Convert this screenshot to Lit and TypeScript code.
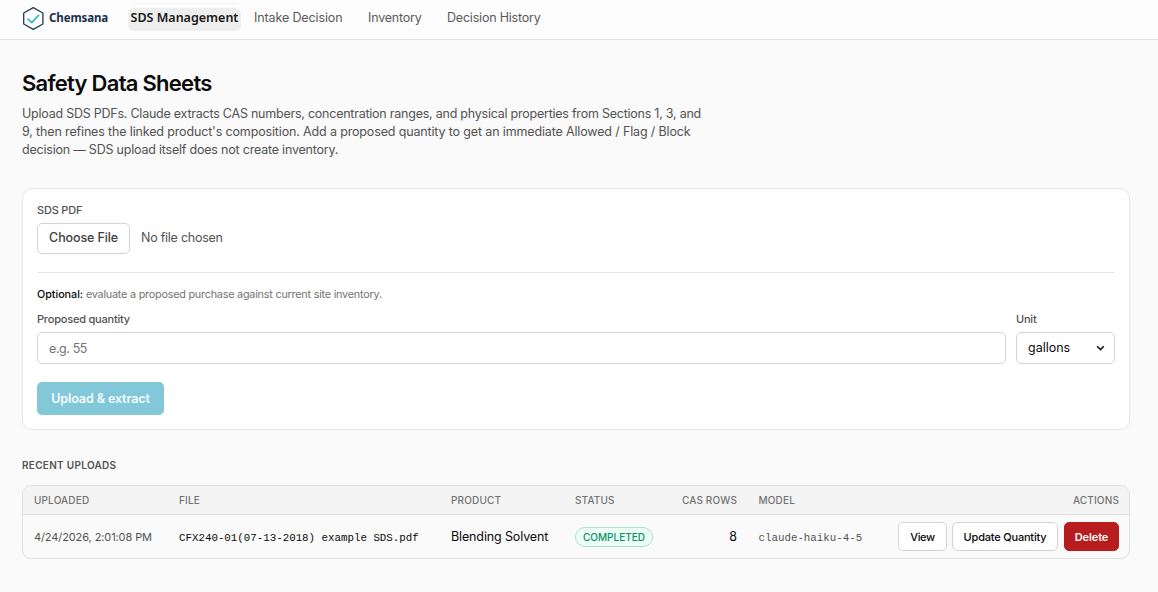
import { LitElement, html, css } from "lit";
import { customElement } from "lit/decorators.js";

@customElement("app-root")
export class AppRoot extends LitElement {
  static styles = css`
    :host { display: block; height: 592px; box-sizing: border-box; background: #fafafa; color: #0a0a0a; font: 12.5px/18px Inter, "Liberation Sans", sans-serif; overflow: hidden; }
    * { box-sizing: border-box; }
    button { font: inherit; color: inherit; margin: 0; }
    header { height: 40px; background: #fdfdfd; border-bottom: 1px solid #e5e5e5; display: flex; align-items: flex-start; padding: 0 22px; }
    .brand { display: flex; align-items: center; height: 37px; width: 106px; gap: 5px; }
    .brand svg { width: 22px; height: 25px; flex: none; }
    .brand span { font: 700 11.5px/18px "Noto Sans", sans-serif; color: #17304d; padding-bottom: 2px; letter-spacing: -0.1px; }
    nav { display: flex; align-items: flex-start; padding-top: 8px; color: #5a5a5a; letter-spacing: -0.2px; }
    nav a { height: 23px; line-height: 19px; white-space: nowrap; }
    .active { position: relative; width: 113px; background: #eeeeee; border-radius: 6px; text-align: center; font: 600 12.5px/19px "Noto Sans", sans-serif; letter-spacing: 0; color: #171717; margin-right: 13px; }
    .active::before { content: ""; position: absolute; left: 5px; right: 4px; top: -5px; height: 1px; background: #f5f5f5; }
    .n1 { width: 114px; letter-spacing: -0.12px; }
    .n2 { width: 79px; }
    main { padding: 30px 28px 0 22px; }
    h1 { margin: 0; font-size: 22px; line-height: 26px; font-weight: 600; letter-spacing: -0.73px; width: max-content; }
    .intro { margin: 9px 0 0; color: #525252; white-space: nowrap; }
    .intro span { display: block; width: max-content; line-height: 17px; padding-bottom: 1px; }
    .p1 { letter-spacing: -0.235px; }
    .p2 { letter-spacing: -0.148px; }
    .p3 { letter-spacing: -0.21px; }
    .card { margin-top: 29px; height: 242px; background: #fff; border: 1px solid #e5e5e5; border-radius: 10px; padding: 14px; display: flex; flex-direction: column; }
    .label { font-size: 11px; line-height: 14px; color: #525252; font-weight: 500; letter-spacing: -0.2px; width: max-content; }
    .filerow { display: flex; align-items: center; gap: 11px; margin-top: 6px; height: 31px; color: #525252; }
    .choose { width: 93px; height: 31px; border: 1px solid #d4d4d4; border-radius: 5px; background: #fff; padding: 0 0 1px; color: #404040; font-weight: 500; letter-spacing: -0.13px; }
    .filerow > span { padding-bottom: 1px; letter-spacing: -0.25px; }
    .rule { height: 1px; background: #e5e5e5; margin-top: 18px; }
    .hint { font-size: 10.8px; line-height: 14px; color: #737373; margin-top: 15px; width: max-content; letter-spacing: -0.21px; }
    .hint b { color: #0a0a0a; font-weight: 500; letter-spacing: -0.05px; }
    .fields { display: flex; gap: 10px; margin-top: 10px; }
    .qty { flex: 1; }
    .unit { width: 99px; }
    .control { display: flex; align-items: center; justify-content: space-between; height: 32px; margin-top: 6px; border: 1px solid #d4d4d4; border-radius: 5px; padding: 0 9px 0 11px; background: #fff; }
    .qty .control { color: #737373; padding: 1px 11px 0; letter-spacing: -0.4px; }
    .upload { width: 127px; height: 33px; margin-top: 18px; border: 0; border-radius: 5px; background: #83c8d8; color: #f5fbfc; font-weight: 600; padding: 0; letter-spacing: -0.1px; }
    h2 { margin: 28px 0 0; font-size: 10px; line-height: 14px; font-weight: 600; color: #525252; letter-spacing: 0.3px; width: max-content; }
    .table { margin-top: 13px; height: 74px; border: 1px solid #e0e0e0; border-radius: 9px; overflow: hidden; }
    .row { display: grid; grid-template-columns: 145px 272px 124px 106px 78px 120px 1fr; align-items: center; }
    .row > div { padding: 0 10px 0 11px; white-space: nowrap; }
    .row > .cas { padding-right: 11px; text-align: right; }
    .row > .model { padding-left: 10.5px; }
    .head { height: 29px; padding-bottom: 1px; background: #f4f4f4; border-bottom: 1px solid #e0e0e0; font-size: 10px; line-height: 14px; color: #737373; font-weight: 500; letter-spacing: 0.15px; }
    .body { height: 43px; }
    .right { text-align: right; justify-content: flex-end; }
    .small { font-size: 11px; color: #525252; letter-spacing: -0.1px; }
    .product { letter-spacing: -0.13px; }
    .row > .mono { font: 10.8px/18px "Liberation Mono", monospace; padding-top: 2px; }
    .muted { color: #525252; }
    .badge { display: flex; align-items: center; justify-content: center; width: 78px; height: 20px; border: 1px solid #a7e3cd; border-radius: 10px; background: #ecfdf5; color: #0b8f68; font-size: 10px; font-weight: 500; }
    .actions { display: flex; gap: 5px; }
    .actions button { height: 29px; border: 1px solid #d4d4d4; border-radius: 5px; background: #fff; padding: 0; font-size: 11px; font-weight: 500; letter-spacing: -0.2px; }
    .actions .view { width: 49px; letter-spacing: -0.35px; }
    .update { width: 106px; }
    .actions .delete { width: 55px; margin-left: 1px; background: #b91c1c; border-color: #b91c1c; color: #fff; font-weight: 600; letter-spacing: -0.1px; }
  `;
  render() {
    return html`
      <header>
        <div class="brand">
          <svg viewBox="0 0 22 25" fill="none"><path d="M11.3 1.6 20.9 7v11L11.3 23.4 1.7 18V7Z" stroke="#1f3a56" stroke-width="1.3" stroke-linejoin="round"/><path d="m5.9 13 4 3.6 6.7-7.3" stroke="#14b8a0" stroke-width="1.5" stroke-linecap="round" stroke-linejoin="round"/></svg>
          <span>Chemsana</span>
        </div>
        <nav><a class="active">SDS Management</a><a class="n1">Intake Decision</a><a class="n2">Inventory</a><a>Decision History</a></nav>
      </header>
      <main>
        <h1>Safety Data Sheets</h1>
        <p class="intro"><span class="p1">Upload SDS PDFs. Claude extracts CAS numbers, concentration ranges, and physical properties from Sections 1, 3, and</span><span class="p2">9, then refines the linked product's composition. Add a proposed quantity to get an immediate Allowed / Flag / Block</span><span class="p3">decision — SDS upload itself does not create inventory.</span></p>
        <section class="card">
          <div class="label">SDS PDF</div>
          <div class="filerow"><button class="choose">Choose File</button><span>No file chosen</span></div>
          <div class="rule"></div>
          <div class="hint"><b>Optional:</b> <span>evaluate a proposed purchase against current site inventory.</span></div>
          <div class="fields">
            <div class="qty"><div class="label">Proposed quantity</div><div class="control"><span>e.g. 55</span></div></div>
            <div class="unit"><div class="label">Unit</div><div class="control"><span>gallons</span><svg width="9" height="6" viewBox="0 0 9 6" fill="none"><path d="m1.2 1.2 3.3 3.3 3.3-3.3" stroke="#171717" stroke-width="1.6"/></svg></div></div>
          </div>
          <button class="upload">Upload &amp; extract</button>
        </section>
        <h2>RECENT UPLOADS</h2>
        <div class="table">
          <div class="row head"><div>UPLOADED</div><div>FILE</div><div>PRODUCT</div><div>STATUS</div><div class="cas">CAS ROWS</div><div class="model">MODEL</div><div class="right">ACTIONS</div></div>
          <div class="row body"><div class="small">4/24/2026, 2:01:08 PM</div><div class="mono">CFX240-01(07-13-2018) example SDS.pdf</div><div class="product">Blending Solvent</div><div><span class="badge">COMPLETED</span></div><div class="cas">8</div><div class="mono muted model">claude-haiku-4-5</div><div class="actions right"><button class="view">View</button><button class="update">Update Quantity</button><button class="delete">Delete</button></div></div>
        </div>
      </main>
    `;
  }
}
